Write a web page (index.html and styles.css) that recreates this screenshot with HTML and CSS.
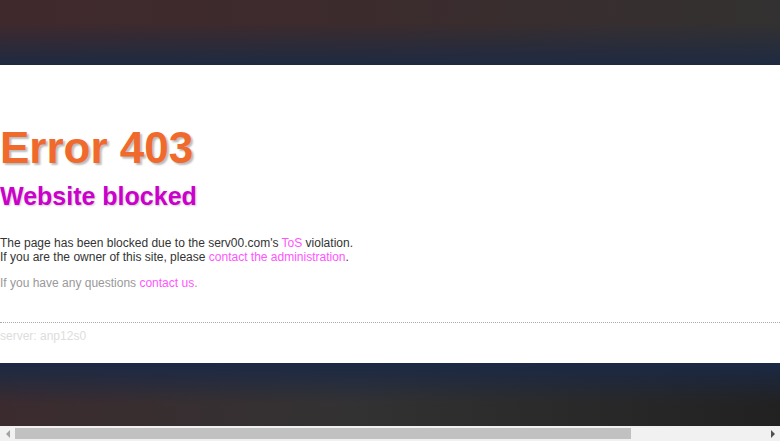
FILE: index.html
```html
<!DOCTYPE html>
<html lang="en">
<head>
<meta charset="utf-8">
<title>Error 403 - Website blocked</title>
<link rel="stylesheet" href="styles.css">
</head>
<body>
<div class="page">
  <div class="band band-top"></div>
  <main class="content">
    <h1 class="title">Error 403</h1>
    <h2 class="subtitle">Website blocked</h2>
    <p class="msg">The page has been blocked due to the serv00.com's <a href="#">ToS</a> violation.<br>If you are the owner of this site, please <a href="#">contact the administration</a>.</p>
    <p class="msg muted">If you have any questions <a href="#">contact us</a>.</p>
    <div class="server">server: anp12s0</div>
  </main>
  <div class="band band-bottom"></div>
</div>
<div class="hscroll" aria-hidden="true">
  <span class="arrow arrow-left"></span>
  <span class="track"><span class="thumb"></span></span>
  <span class="arrow arrow-right"></span>
</div>
</body>
</html>
```
FILE: styles.css
```css
html, body {
  margin: 0;
  padding: 0;
}
body {
  font-family: "Liberation Sans", Arial, sans-serif;
  font-size: 12px;
  line-height: 14px;
  color: #333;
  background: #222;
  overflow: hidden;
}
.page {
  display: flex;
  flex-direction: column;
}
.band {
  height: 65px;
}
.band-top {
  background:
    linear-gradient(to bottom, rgba(30, 42, 66, 0) 35%, rgba(30, 42, 66, 1) 100%),
    linear-gradient(to right, #40292d 0%, #3c2b2d 45%, #333131 100%);
}
.band-bottom {
  height: 63px;
  background:
    linear-gradient(to bottom, rgba(27, 41, 69, 1) 0%, rgba(27, 41, 69, 0) 65%),
    linear-gradient(to right, #3b2b2e 0%, #333233 45%, #262626 85%, #212121 100%);
}
.content {
  background: #fff;
  padding: 58px 0 20px;
}
.title {
  margin: 0;
  font-size: 44px;
  line-height: 50px;
  font-weight: bold;
  color: #ef6a2c;
  text-shadow: 2px 2px 2px #bbb;
}
.subtitle {
  margin: 9px 0 0;
  font-size: 25px;
  line-height: 28px;
  font-weight: bold;
  color: #cc00cc;
  text-shadow: 1px 1px 2px #ccc;
}
.msg {
  margin: 26px 0 0;
}
.msg + .msg {
  margin-top: 12px;
}
.muted {
  color: #999;
}
.msg a {
  color: #ff55ff;
  text-decoration: none;
}
.server {
  margin-top: 32px;
  padding-top: 6px;
  border-top: 1px dotted #aaa;
  color: #ddd;
}
.hscroll {
  position: fixed;
  left: 0;
  right: 0;
  bottom: 0;
  height: 15px;
  background: #f1f1f1;
  display: flex;
  align-items: center;
}
.arrow {
  width: 15px;
  height: 15px;
  display: flex;
  align-items: center;
  justify-content: center;
}
.arrow::before {
  content: "";
  width: 0;
  height: 0;
  border-top: 4px solid transparent;
  border-bottom: 4px solid transparent;
}
.arrow-left::before {
  border-right: 4px solid #a3a3a3;
}
.arrow-right::before {
  border-left: 4px solid #505050;
}
.track {
  flex: 1;
  height: 11px;
  display: flex;
}
.thumb {
  width: 616px;
  height: 11px;
  background: #c1c1c1;
}
```
